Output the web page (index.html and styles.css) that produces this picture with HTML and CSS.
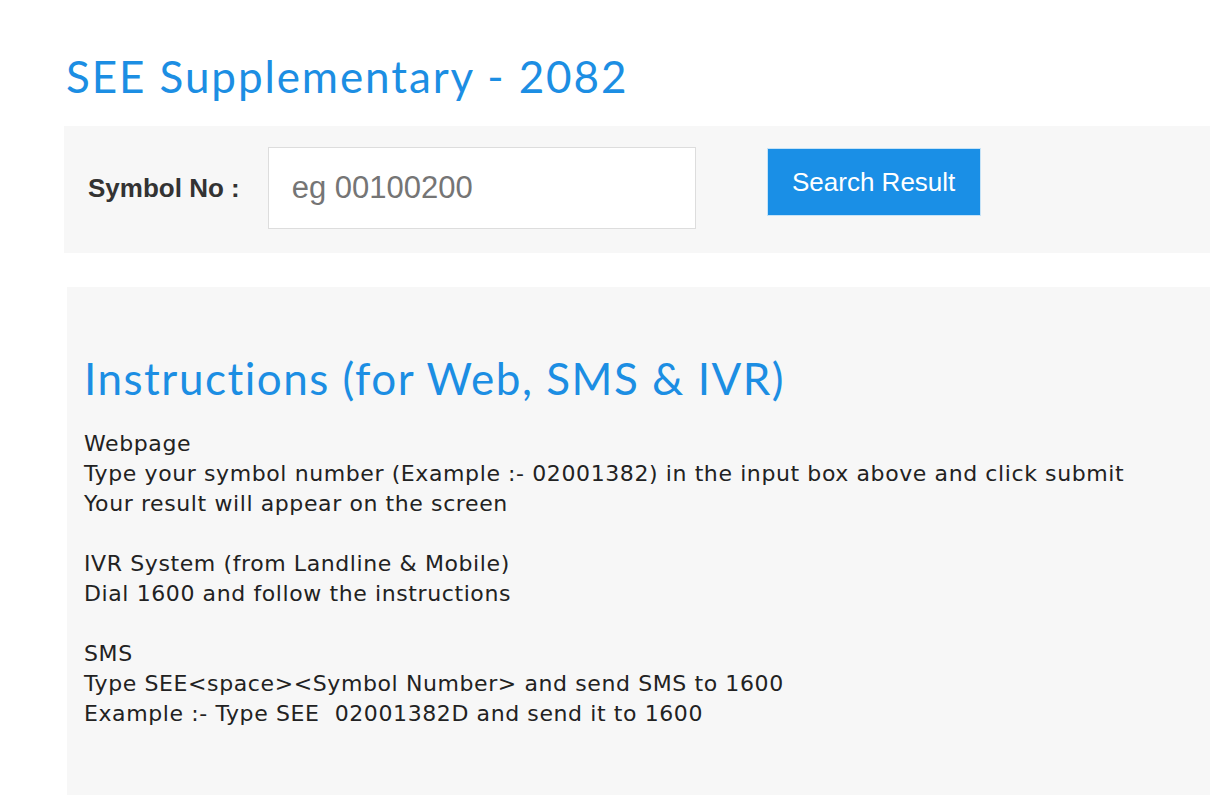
FILE: index.html
```html
<!DOCTYPE html>
<html lang="en">
<head>
    <meta charset="UTF-8">
    <meta name="viewport" content="width=device-width, initial-scale=1.0">
    <title>SEE Supplementary - 2082</title>
    <link rel="stylesheet" href="styles.css">
</head>
<body>
    <div class="wrap">
        <h1 class="title">SEE Supplementary - 2082</h1>
        <!-- 查询表单 -->
        <form class="search" onsubmit="return false;">
            <label class="search-label" for="symbol">Symbol No :</label>
            <input class="search-input" type="text" id="symbol" placeholder="eg 00100200">
            <button class="search-btn" type="submit">Search Result</button>
        </form>
        <!-- 说明 -->
        <div class="notes">
            <h2 class="notes-title">Instructions (for Web, SMS &amp; IVR)</h2>
            <p class="notes-text">
                Webpage<br>
                Type your symbol number (Example :- 02001382) in the input box above and click submit<br>
                Your result will appear on the screen<br>
                <br>
                IVR System (from Landline &amp; Mobile)<br>
                Dial 1600 and follow the instructions<br>
                <br>
                SMS<br>
                Type SEE&lt;space&gt;&lt;Symbol Number&gt; and send SMS to 1600<br>
                Example :- Type SEE&nbsp; 02001382D and send it to 1600
            </p>
        </div>
    </div>
</body>
</html>
```

FILE: styles.css
```css
* {
    margin: 0;
    padding: 0;
    box-sizing: border-box;
}
html,
body {
    overflow: hidden;
}
body {
    background: #fff;
    font-family: "DejaVu Sans", sans-serif;
    color: #222;
}
.wrap {
    width: 1200px;
    padding: 48px 0 0 64px;
}
.title {
    font-family: Lato, sans-serif;
    font-weight: 400;
    font-size: 44px;
    line-height: 56px;
    letter-spacing: 1.9px;
    color: #1c8ee3;
    margin-left: 2px;
    margin-bottom: 22px;
}
.search {
    display: flex;
    align-items: flex-start;
    background: #f7f7f7;
    padding: 21px 24px 24px;
    width: 1180px;
}
.search-label {
    font-family: "Liberation Sans", Arial, sans-serif;
    font-weight: 700;
    font-size: 26px;
    color: #333;
    line-height: 82px;
    margin-right: 28px;
}
.search-input {
    width: 428px;
    height: 82px;
    border: 1px solid #ddd;
    background: #fff;
    padding-left: 23px;
    font-family: "Liberation Sans", Arial, sans-serif;
    font-size: 31px;
    color: #333;
    outline: none;
}
.search-input::placeholder {
    color: #757575;
}
.search-btn {
    margin-left: 71px;
    margin-top: 1px;
    width: 214px;
    height: 68px;
    background: #1a8fe6;
    border: 1px solid #c6e3f7;
    color: #fff;
    font-family: "Liberation Sans", Arial, sans-serif;
    font-size: 26px;
    cursor: pointer;
}
.notes {
    margin: 34px 0 0 3px;
    width: 1180px;
    height: 508px;
    background: #f7f7f7;
    padding: 63px 17px 0;
}
.notes-title {
    font-family: Lato, sans-serif;
    font-weight: 400;
    font-size: 44px;
    line-height: 56px;
    letter-spacing: 1.5px;
    color: #1c8ee3;
    margin-bottom: 23px;
}
.notes-text {
    font-size: 22px;
    line-height: 30px;
    letter-spacing: 0.6px;
}
```
